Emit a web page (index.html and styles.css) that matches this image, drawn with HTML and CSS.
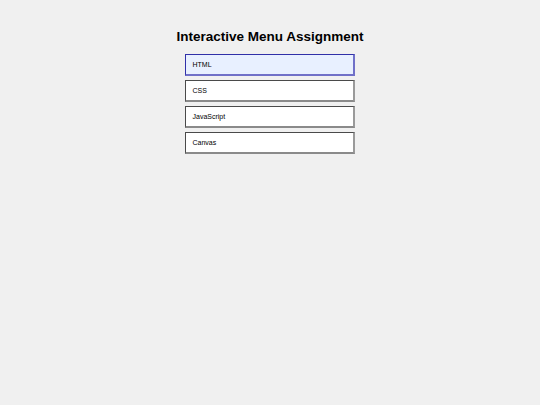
FILE: index.html
```html
<!DOCTYPE html>
<html>
<head>
<meta charset="utf-8">
<link rel="stylesheet" href="styles.css">
</head>
<body>
<main class="page">
  <h1 class="title">Interactive Menu Assignment</h1>
  <ul class="menu">
    <li class="item active">HTML</li>
    <li class="item">CSS</li>
    <li class="item">JavaScript</li>
    <li class="item">Canvas</li>
  </ul>
</main>
</body>
</html>
```
FILE: styles.css
```css
html, body {
  margin: 0;
  padding: 0;
  background: #f0f0f0;
  font-family: "Liberation Sans", Arial, sans-serif;
  color: #000;
}
.page {
  display: flex;
  flex-direction: column;
  align-items: center;
  padding-top: 29px;
}
.title {
  margin: 0 0 9px 0;
  font-size: 13.5px;
  font-weight: bold;
  line-height: 16px;
}
.menu {
  list-style: none;
  margin: 0;
  padding: 0;
  width: 170px;
  display: flex;
  flex-direction: column;
  gap: 4px;
}
.item {
  box-sizing: border-box;
  height: 22px;
  padding: 0 6px 0 6.5px;
  display: flex;
  align-items: center;
  font-size: 7px;
  background: #fff;
  border-style: solid;
  border-width: 1.5px 2px 2px 1.5px;
  border-color: #4a4a4a #9a9a9a #8a8a8a #4a4a4a;
}
.item.active {
  background: #e8f0ff;
  border-color: #3030a8 #7070c8 #7070c8 #3030a8;
}
```
